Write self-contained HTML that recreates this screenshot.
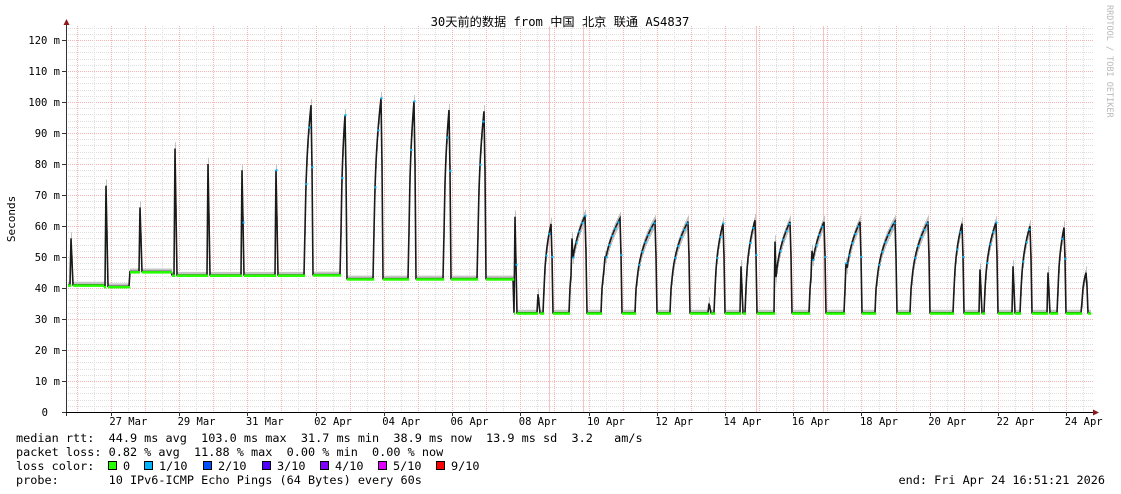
<!DOCTYPE html>
<html><head><meta charset="utf-8"><style>
html,body{margin:0;padding:0;background:#fff;width:1121px;height:494px;overflow:hidden}
svg{display:block}
text{font-family:"DejaVu Sans Mono","Liberation Mono","Noto Sans CJK SC",monospace;}
</style></head><body>
<svg id="g" width="1121" height="494" xmlns="http://www.w3.org/2000/svg">
<rect width="1121" height="494" fill="#fff"/>
<g id="grid"></g>
<g id="data"></g>
<g id="axes"></g>
<text x="560" y="26" font-size="12.2" text-anchor="middle" fill="#000" font-family="'DejaVu Sans Mono','Noto Sans CJK SC',monospace">30天前的数据 from 中国 北京 联通 AS4837</text>
<text transform="translate(15,219) rotate(-90)" font-size="11" text-anchor="middle" fill="#000">Seconds</text>
<text transform="translate(1107,5) rotate(90)" font-size="8.5" fill="#b8b8b8">RRDTOOL / TOBI OETIKER</text>
<g font-size="11.83" fill="#000">
<text x="16" y="442" xml:space="preserve">median rtt:  44.9 ms avg  103.0 ms max  31.7 ms min  38.9 ms now  13.9 ms sd  3.2   am/s</text>
<text x="16" y="456" xml:space="preserve">packet loss: 0.82 % avg  11.88 % max  0.00 % min  0.00 % now</text>
<text x="16" y="470" xml:space="preserve">loss color:  </text>
<text x="16" y="484" xml:space="preserve">probe:       10 IPv6-ICMP Echo Pings (64 Bytes) every 60s</text>
<text x="1105" y="484" text-anchor="end" xml:space="preserve">end: Fri Apr 24 16:51:21 2026</text>
</g>
<g id="legend" font-size="11.83"></g>
</svg>
<script>
var NS="http://www.w3.org/2000/svg";
function el(p,n,a,t){var e=document.createElementNS(NS,n);for(var k in a)e.setAttribute(k,a[k]);if(t!=null)e.textContent=t;document.getElementById(p).appendChild(e);return e;}
var X0=66,X1=1093,Y0=412;
function Y(v){return Y0-v*3.1;}
for(var v=2;v<=124;v+=2){var y=Math.round(Y(v))+0.5;var maj=v%10==0;
 el("grid","line",{x1:X0,x2:X1,y1:y,y2:y,stroke:maj?"#f4b4b4":"#dedede","stroke-width":1,"stroke-dasharray":"1,1"});}
for(var k=-1;k<=60;k++){var x=76.7+k*17.06;if(x<X0+1||x>X1)continue;var maj=k%2==0;
 el("grid","line",{x1:Math.round(x)+0.5,x2:Math.round(x)+0.5,y1:26,y2:412,stroke:maj?"#f4b4b4":"#dedede","stroke-width":1,"stroke-dasharray":"1,1"});}
[549,583,756,823].forEach(function(x){el("grid","line",{x1:x+.5,x2:x+.5,y1:26,y2:412,stroke:"#f4c4c4","stroke-width":1});});
function base(x){if(x<104)return 41;if(x<130)return 40.5;if(x<172)return 45.3;if(x<305)return 44.2;if(x<342)return 44.3;if(x<514)return 43;return 32;}
var spikes=[[71,56],[106,73],[140,66],[175,85],[208,80],[242,78],[276,78],[515,63],[538,38],[572,56],[605,50],[709,35],[741,47],[775,55],[812,52],[846,48],[980,46],[1013,47],[1048,45]];
var pulses=[[305,312,102],[341,346,100],[374,382,104],[409,415,104],[444,450,101],[478,485,100],
[544,552,62],[570,586,64],[602,621,63],[636,656,62],[671,689,62],[715,724,62],[746,756,63],[775,791,62],[810,825,62],[845,861,62],[876,896,62],[911,929,62],[954,963,62],[985,997,62],[1021,1031,61],[1058,1065,61],[1082,1087,46]];
var pts=[];
for(var x=X0+2;x<=1090;x++){var b=base(x),v=b;
 pulses.forEach(function(p){if(x>=p[0]&&x<=p[1]){var t=(x-p[0])/(p[1]-p[0]);var w=Math.pow(Math.max(t,0.02),0.35);v=b+(p[2]-b)*w;if(x==p[1])v=b+(p[2]-b)*0.6;}});
 spikes.forEach(function(s){if(x==s[0])v=Math.max(v,s[1]);if(x==s[0]+1)v=Math.max(v,(s[1]+b)/2);});
 pts.push([x,v,b]);}
pts.forEach(function(p){var pk=p[1]>p[2]+2;var up=pk?2:1;
 el("data","line",{x1:p[0]+.5,x2:p[0]+.5,y1:Y(p[1]+up),y2:Y(Math.max(p[2],p[1]-(pk?2:0))),stroke:"#c4c4c4","stroke-width":1});});
var d="M"+pts.map(function(p){return p[0]+","+Y(p[1]).toFixed(1);}).join("L");
el("data","path",{d:d,fill:"none",stroke:"#1a1a1a","stroke-width":1.6});
pts.forEach(function(p){
 if(p[1]<=p[2]+0.3)el("data","rect",{x:p[0],y:Y(p[2])-0.5,width:1.2,height:2.5,fill:"#26ff00"});
 else if(p[1]>p[2]+15&&p[0]%3==0)el("data","rect",{x:p[0]-0.5,y:Y(p[1])-1,width:2,height:2,fill:"#00b4ff"});});
el("axes","line",{x1:66.5,x2:66.5,y1:24,y2:416,stroke:"#333"});
el("axes","line",{x1:62,x2:1094,y1:412.5,y2:412.5,stroke:"#000"});
el("axes","path",{d:"M63.5,25 L69.5,25 L66.5,19 Z",fill:"#8b1a1a"});
el("axes","path",{d:"M1093,409.5 L1093,415.5 L1099,412.5 Z",fill:"#8b1a1a"});
for(var v=0;v<=120;v+=10){var y=Y(v);el("axes","line",{x1:62,x2:66,y1:y+.5,y2:y+.5,stroke:"#333"});
 el("axes","text",{x:v==0?48:60,y:y+4,"font-size":"10.5","text-anchor":"end",fill:"#000"},v==0?"0":(v+" m"));}
var labs=["27 Mar","29 Mar","31 Mar","02 Apr","04 Apr","06 Apr","08 Apr","10 Apr","12 Apr","14 Apr","16 Apr","18 Apr","20 Apr","22 Apr","24 Apr"];
labs.forEach(function(l,i){var x=76.7+(1+2*i)*34.12;el("axes","line",{x1:Math.round(x)+.5,x2:Math.round(x)+.5,y1:412,y2:416,stroke:"#333"});
 el("axes","text",{x:x+17.5,y:425,"font-size":"10.5","text-anchor":"middle",fill:"#000"},l);});
var lc=[["#26ff00","0"],["#00b4ff","1/10"],["#0050ff","2/10"],["#5000ff","3/10"],["#8000ff","4/10"],["#e000ff","5/10"],["#ff0000","9/10"]];
var lx=[108,144,203,262,320,378,436];
lc.forEach(function(c,i){el("legend","rect",{x:lx[i]+.5,y:461.5,width:8,height:8,fill:c[0],stroke:"#000"});
 el("legend","text",{x:lx[i]+15,y:470,fill:"#000"},c[1]);});
</script>
</body></html>
